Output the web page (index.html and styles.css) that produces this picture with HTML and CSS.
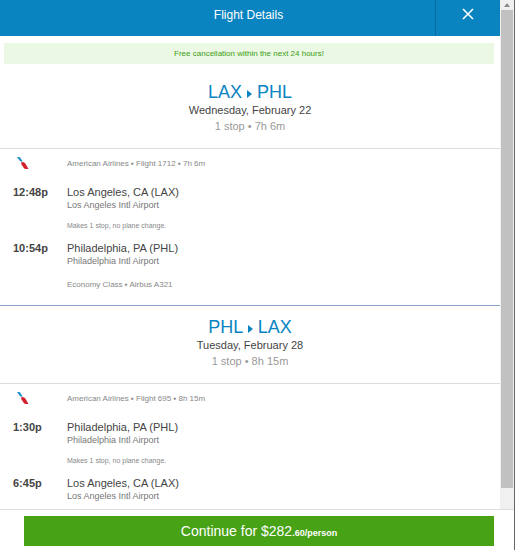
FILE: index.html
```html
<!DOCTYPE html>
<html lang="en">
<head>
    <meta charset="UTF-8">
    <meta name="viewport" content="width=device-width, initial-scale=1.0">
    <title>Flight Details</title>
    <link rel="stylesheet" href="styles.css">
</head>
<body>
    <div class="page">
        <div class="main">
            <div class="content">
                <header class="topbar">
                    <h1>Flight Details</h1>
                    <button type="button" class="close" aria-label="Close">
                        <svg width="12" height="12" viewBox="0 0 12 12"><path d="M1 1L11 11M11 1L1 11" stroke="#fff" stroke-width="1.600"/></svg>
                    </button>
                </header>

                <p class="notice">Free cancellation within the next 24 hours!</p>

                <!-- Outbound -->
                <section class="trip">
                    <div class="trip-head">
                        <h2>LAX <svg class="arrow" width="5" height="8" viewBox="0 0 5 8"><path d="M0 0L5 4L0 8Z" fill="#0a84c1"/></svg> PHL</h2>
                        <p class="date">Wednesday, February 22</p>
                        <p class="duration">1 stop • 7h 6m</p>
                    </div>
                    <div class="leg">
                        <svg class="airline" width="12" height="12" viewBox="0 0 12 12">
                            <path d="M0 0H2Q3 0 3.500 1L5.500 4.500Q4 5 3 4Z" fill="#1c8fc9"/>
                            <path d="M4 5.500Q5 5 6 5L8 6L11.500 12H9Q7.500 12 6.500 10.500L4.500 7.500Z" fill="#d3202f"/>
                        </svg>
                        <p class="small">American Airlines ▪ Flight 1712 ▪ 7h 6m</p>
                        <time class="hour">12:48p</time>
                        <div>
                            <p class="city">Los Angeles, CA (LAX)</p>
                            <p class="airport">Los Angeles Intl Airport</p>
                            <p class="stops">Makes 1 stop, no plane change.</p>
                        </div>
                        <time class="hour">10:54p</time>
                        <div>
                            <p class="city">Philadelphia, PA (PHL)</p>
                            <p class="airport">Philadelphia Intl Airport</p>
                            <p class="small cabin">Economy Class ▪ Airbus A321</p>
                        </div>
                    </div>
                </section>

                <!-- Return -->
                <section class="trip">
                    <div class="trip-head">
                        <h2>PHL <svg class="arrow" width="5" height="8" viewBox="0 0 5 8"><path d="M0 0L5 4L0 8Z" fill="#0a84c1"/></svg> LAX</h2>
                        <p class="date">Tuesday, February 28</p>
                        <p class="duration">1 stop • 8h 15m</p>
                    </div>
                    <div class="leg">
                        <svg class="airline" width="12" height="12" viewBox="0 0 12 12">
                            <path d="M0 0H2Q3 0 3.500 1L5.500 4.500Q4 5 3 4Z" fill="#1c8fc9"/>
                            <path d="M4 5.500Q5 5 6 5L8 6L11.500 12H9Q7.500 12 6.500 10.500L4.500 7.500Z" fill="#d3202f"/>
                        </svg>
                        <p class="small">American Airlines ▪ Flight 695 ▪ 8h 15m</p>
                        <time class="hour">1:30p</time>
                        <div>
                            <p class="city">Philadelphia, PA (PHL)</p>
                            <p class="airport">Philadelphia Intl Airport</p>
                            <p class="stops">Makes 1 stop, no plane change.</p>
                        </div>
                        <time class="hour">6:45p</time>
                        <div>
                            <p class="city">Los Angeles, CA (LAX)</p>
                            <p class="airport">Los Angeles Intl Airport</p>
                        </div>
                    </div>
                </section>
            </div>

            <div class="scrollbar">
                <svg width="6" height="4" viewBox="0 0 6 4"><path d="M0 4L3 0L6 4Z" fill="#8a8a8a"/></svg>
                <div class="thumb"></div>
            </div>
        </div>

        <footer class="footer">
            <button type="button" class="continue">Continue for $282<span class="cents">.60/person</span></button>
        </footer>
    </div>
</body>
</html>
```

FILE: styles.css
```css
* {
    box-sizing: border-box;
}

body {
    margin: 0;
    font-family: "Liberation Sans", Arial, sans-serif;
    font-size: 11px;
    color: #444;
    background-color: #fff;
}

h1, h2, p {
    margin: 0;
    font-weight: normal;
}

button {
    padding: 0;
    border: none;
    font-family: inherit;
    color: #fff;
    cursor: pointer;
}

.page {
    display: flex;
    flex-direction: column;
    height: 100vh;
    border-right: 1px solid #666;
}

.main {
    display: flex;
    flex: 1;
    min-height: 0;
}

.content {
    flex: 1;
    overflow: hidden;
}

/* Blue title bar */
.topbar {
    display: flex;
    height: 36px;
    background-color: #0a84c1;
    color: #fff;
}

.topbar h1 {
    flex: 1;
    padding-left: 62px;
    font-size: 12px;
    line-height: 31px;
    text-align: center;
}

.close {
    width: 65px;
    padding-bottom: 8px;
    border-left: 1px solid #086a9f;
    background-color: transparent;
}

.close svg {
    display: block;
    margin: 0 auto;
}

.notice {
    margin: 7px 6px 7px 4px;
    background-color: #ebf8e4;
    color: #3d9e16;
    font-size: 8px;
    line-height: 21px;
    text-align: center;
}

/* One direction of the trip */
.trip + .trip {
    border-top: 1px solid #8fa3c8;
}

.trip-head {
    padding: 11px 0 14px;
    border-bottom: 1px solid #ddd;
    line-height: 16px;
    text-align: center;
}

.trip-head h2 {
    font-size: 18px;
    line-height: 20px;
    color: #0a84c1;
}

.arrow {
    vertical-align: 0;
}

.duration {
    color: #999;
}

.leg {
    display: grid;
    grid-template-columns: 54px 1fr;
    padding: 8px 13px 14px;
    line-height: 13px;
}

.airline {
    margin-left: 4px;
}

.small,
.stops {
    font-size: 8px;
    color: #888;
}

.small {
    margin-bottom: 16px;
}

.hour {
    font-weight: bold;
}

.airport {
    font-size: 9px;
    color: #777;
}

.stops {
    margin: 7px 0 10px;
    font-size: 7px;
}

.cabin {
    margin: 10px 0 0;
}

/* Scrollbar */
.scrollbar {
    display: flex;
    flex-direction: column;
    align-items: center;
    width: 14px;
    padding: 3px 1px 21px;
    background-color: #f0f0f0;
}

.scrollbar svg {
    flex: none;
    margin-bottom: 3px;
}

.thumb {
    flex: 1;
    width: 100%;
    background-color: #c1c1c1;
}

.footer {
    padding: 6px 20px 4px 24px;
    border-top: 1px solid #ddd;
}

.continue {
    display: block;
    width: 100%;
    background-color: #48a216;
    font-size: 14px;
    line-height: 30px;
}

.cents {
    font-size: 9px;
    font-weight: bold;
    line-height: 1;
}
```
